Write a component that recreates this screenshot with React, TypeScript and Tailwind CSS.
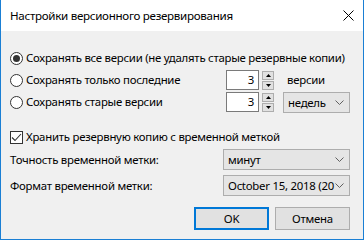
import React from "react";

function Radio({ checked }: { checked?: boolean }) {
  return (
    <span className="w-[13px] h-[13px] rounded-full border border-[#333333] bg-white flex items-center justify-center shrink-0">
      {checked && <span className="w-[7px] h-[7px] rounded-full bg-[#333333]" />}
    </span>
  );
}

function Chevron() {
  return (
    <svg width="9" height="5" viewBox="0 0 9 5" className="shrink-0">
      <path d="M0.5 0.5 L4.5 4.5 L8.5 0.5" fill="none" stroke="#606060" strokeWidth="1" />
    </svg>
  );
}

function Spin({ value }: { value: string }) {
  return (
    <div className="flex items-center">
      <div className="w-[33px] h-[20px] border border-[#7a7a7a] bg-white flex items-center justify-end pr-[4px]">
        {value}
      </div>
      <div className="ml-[3px] w-[12px] h-[19px] flex flex-col gap-[1px]">
        <div className="h-[9px] border border-[#adadad] bg-[#e1e1e1] flex items-center justify-center">
          <svg width="5" height="3" viewBox="0 0 5 3"><path d="M0 3 L2.5 0 L5 3 Z" fill="#000" /></svg>
        </div>
        <div className="h-[9px] border border-[#adadad] bg-[#e1e1e1] flex items-center justify-center">
          <svg width="5" height="3" viewBox="0 0 5 3"><path d="M0 0 L2.5 3 L5 0 Z" fill="#000" /></svg>
        </div>
      </div>
    </div>
  );
}

function Select({ text, w }: { text: string; w: string }) {
  return (
    <div className={`${w} h-[21px] border border-[#adadad] bg-[#e5e5e5] flex items-center pl-[4px] pr-[5px]`}>
      <span className="flex-1 min-w-0 whitespace-nowrap leading-[17px] mr-[3px]">{text}</span>
      <Chevron />
    </div>
  );
}

export default function App() {
  return (
    <div className="w-[364px] h-[240px] border-x border-b border-[#1a7fd4] bg-[#f0f0f0] flex flex-col text-[11.4px] tracking-[-0.25px] leading-none text-black font-['Noto_Sans','DejaVu_Sans',sans-serif]">
      <div className="h-[31px] bg-white flex items-center justify-between pl-[9px] pr-[9px] shrink-0 text-[11.6px] tracking-[-0.3px]">
        <span>Настройки версионного резервирования</span>
        <svg width="11" height="11" viewBox="0 0 11 11">
          <path d="M0.5 0.5 L10.5 10.5 M10.5 0.5 L0.5 10.5" stroke="#000" strokeWidth="1" />
        </svg>
      </div>
      <div className="flex flex-col pl-[9px] pr-[13px] pt-[16px]">
        <div className="h-[22px] flex items-center">
          <Radio checked />
          <span className="ml-[3px] whitespace-nowrap">Сохранять все версии (не удалять старые резервные копии)</span>
        </div>
        <div className="h-[22px] flex items-center">
          <div className="w-[216px] flex items-center">
            <Radio />
            <span className="ml-[3px] whitespace-nowrap">Сохранять только последние</span>
          </div>
          <Spin value="3" />
          <span className="ml-[13px]">версии</span>
        </div>
        <div className="h-[22px] flex items-center">
          <div className="w-[216px] flex items-center">
            <Radio />
            <span className="ml-[3px] whitespace-nowrap">Сохранять старые версии</span>
          </div>
          <Spin value="3" />
          <div className="ml-[9px]">
            <Select text="недель" w="w-[67px]" />
          </div>
        </div>
        <div className="h-[22px] mt-[13px] flex items-center">
          <span className="w-[13px] h-[13px] border border-[#333333] bg-white flex items-center justify-center shrink-0">
            <svg width="11" height="9" viewBox="0 0 11 9">
              <path d="M1 4.5 L4 7.5 L10 1" fill="none" stroke="#333" strokeWidth="1.1" />
            </svg>
          </span>
          <span className="ml-[3px] whitespace-nowrap">Хранить резервную копию с временной меткой</span>
        </div>
        <div className="h-[21px] mt-[1px] flex items-center">
          <span className="w-[213px]">Точность временной метки:</span>
          <Select text="минут" w="w-[127px]" />
        </div>
        <div className="h-[21px] mt-[5px] flex items-center">
          <span className="w-[213px]">Формат временной метки:</span>
          <Select text="October 15, 2018 (20" w="w-[127px]" />
        </div>
        <div className="h-[23px] mt-[11px] flex justify-end gap-[6px]">
          <div className="w-[75px] h-[23px] border-2 border-[#0078d7] bg-[#e1e1e1] flex items-center justify-center">OK</div>
          <div className="w-[75px] h-[23px] border border-[#adadad] bg-[#e1e1e1] flex items-center justify-center">Отмена</div>
        </div>
      </div>
    </div>
  );
}
